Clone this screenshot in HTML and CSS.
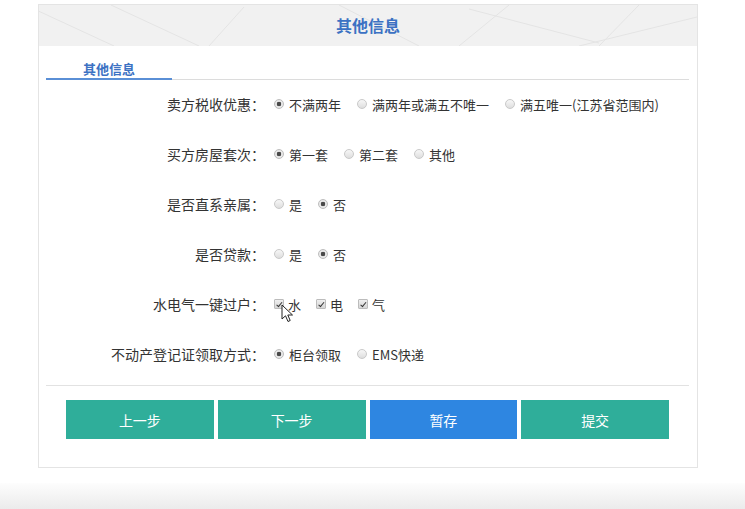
FILE: index.html
```html
<!DOCTYPE html>
<html lang="zh-CN">
<head>
<meta charset="utf-8">
<title>其他信息</title>
<link rel="stylesheet" href="styles.css">
</head>
<body>
<div class="card">
  <div class="card-header">
    <svg class="header-lines" width="658" height="41" viewBox="0 0 658 41">
      <g stroke="#e4e4e4" stroke-width="1" fill="none">
        <line x1="-5" y1="4" x2="75" y2="41"/>
        <line x1="72" y1="0" x2="160" y2="41"/>
        <line x1="205" y1="2" x2="170" y2="41"/>
        <line x1="300" y1="0" x2="380" y2="41"/>
        <line x1="420" y1="41" x2="470" y2="0"/>
        <line x1="430" y1="4" x2="560" y2="38"/>
        <line x1="600" y1="0" x2="560" y2="41"/>
        <line x1="540" y1="41" x2="658" y2="12"/>
      </g>
    </svg>
    <h1 class="card-title">其他信息</h1>
  </div>
  <div class="section">
    <div class="tabs"><span class="tab">其他信息</span></div>
    <div class="form">
      <div class="row">
        <div class="label">卖方税收优惠：</div>
        <div class="opts">
          <span class="opt"><span class="radio on"></span>不满两年</span>
          <span class="opt"><span class="radio"></span>满两年或满五不唯一</span>
          <span class="opt"><span class="radio"></span>满五唯一(江苏省范围内)</span>
        </div>
      </div>
      <div class="row">
        <div class="label">买方房屋套次：</div>
        <div class="opts">
          <span class="opt"><span class="radio on"></span>第一套</span>
          <span class="opt"><span class="radio"></span>第二套</span>
          <span class="opt"><span class="radio"></span>其他</span>
        </div>
      </div>
      <div class="row">
        <div class="label">是否直系亲属：</div>
        <div class="opts">
          <span class="opt"><span class="radio"></span>是</span>
          <span class="opt"><span class="radio on"></span>否</span>
        </div>
      </div>
      <div class="row">
        <div class="label">是否贷款：</div>
        <div class="opts">
          <span class="opt"><span class="radio"></span>是</span>
          <span class="opt"><span class="radio on"></span>否</span>
        </div>
      </div>
      <div class="row">
        <div class="label">水电气一键过户：</div>
        <div class="opts">
          <span class="opt cb"><span class="check"></span>水</span>
          <span class="opt cb"><span class="check"></span>电</span>
          <span class="opt cb"><span class="check"></span>气</span>
        </div>
      </div>
      <div class="row">
        <div class="label">不动产登记证领取方式：</div>
        <div class="opts">
          <span class="opt"><span class="radio on"></span>柜台领取</span>
          <span class="opt"><span class="radio"></span>EMS快递</span>
        </div>
      </div>
    </div>
    <div class="actions">
      <button class="btn">上一步</button>
      <button class="btn">下一步</button>
      <button class="btn btn-blue">暂存</button>
      <button class="btn">提交</button>
    </div>
  </div>
</div>
<div class="shade"></div>
<svg class="cursor" width="13" height="19" viewBox="0 0 13 19">
  <path d="M1 1 L1 15 L4.5 11.8 L7 17.5 L9.2 16.5 L6.8 11 L11.5 11 Z" fill="#fff" stroke="#222" stroke-width="1" stroke-linejoin="round"/>
</svg>
</body>
</html>
```

FILE: styles.css
```css
html, body {
  margin: 0;
  padding: 0;
  background: #fff;
  font-family: "Noto Sans CJK SC", "Noto Sans", sans-serif;
  color: #333;
}
body {
  position: relative;
  height: 509px;
  overflow: hidden;
}
.card {
  margin: 4px 0 0 38px;
  width: 658px;
  height: 462px;
  border: 1px solid #e4e4e4;
  background: #fff;
}
.card-header {
  position: relative;
  height: 41px;
  background: #f1f1f1;
  overflow: hidden;
}
.header-lines {
  position: absolute;
  left: 0;
  top: 0;
}
.card-title {
  position: relative;
  margin: 0;
  line-height: 41px;
  text-align: center;
  font-size: 16px;
  font-weight: bold;
  color: #3c72c3;
}
.section {
  padding: 0 8px 0 7px;
}
.tabs {
  margin-top: 14px;
  border-bottom: 1px solid #dcdcdc;
  display: flex;
}
.tab {
  width: 126px;
  text-align: center;
  font-size: 13px;
  font-weight: bold;
  color: #3c72c3;
  line-height: 18px;
  border-bottom: 2px solid #5a8fd6;
  margin-bottom: -1px;
}
.form {
  display: flex;
  flex-direction: column;
  margin-top: -1px;
}
.row {
  height: 50px;
  display: grid;
  grid-template-columns: 219px 1fr;
  column-gap: 9px;
  align-items: center;
}
.label {
  text-align: right;
  font-size: 14px;
  color: #333;
  white-space: nowrap;
}
.opts {
  display: flex;
  align-items: center;
  gap: 16px;
  font-size: 13px;
  color: #333;
}
.opt {
  display: flex;
  align-items: center;
  gap: 5px;
  white-space: nowrap;
}
.radio {
  width: 8px;
  height: 8px;
  border-radius: 50%;
  border: 1px solid #c9c9c9;
  background: linear-gradient(#f7f7f7, #dedede);
  position: relative;
}
.radio.on {
  background: radial-gradient(circle, #4a4a4a 0, #4a4a4a 2px, #ececec 2.6px, #e0e0e0 100%);
  border-color: #bdbdbd;
}
.cb {
  gap: 4px;
}
.opts .cb + .cb {
  margin-left: -1px;
}
.check {
  width: 8px;
  height: 8px;
  border: 1px solid #bcbcbc;
  border-radius: 1px;
  background: linear-gradient(#efefef, #d6d6d6);
  position: relative;
}
.check::after {
  content: "";
  position: absolute;
  left: 2.5px;
  top: 0.5px;
  width: 2px;
  height: 4.5px;
  border-right: 1.5px solid #333;
  border-bottom: 1.5px solid #333;
  transform: rotate(40deg);
}
.actions {
  margin-top: 6px;
  border-top: 1px solid #e2e2e2;
  padding: 14px 20px 0 20px;
  display: flex;
  gap: 4px;
}
.btn {
  width: 148px;
  height: 39px;
  border: 0;
  margin: 0;
  padding: 0;
  background: #2fae9a;
  color: #fff;
  font-family: "Noto Sans CJK SC", "Noto Sans", sans-serif;
  font-size: 14px;
  cursor: pointer;
}
.btn-blue {
  background: #2e86e1;
}
.shade {
  position: absolute;
  left: 0;
  right: 0;
  bottom: 0;
  height: 26px;
  background: linear-gradient(#fdfdfd, #ebebeb);
}
.cursor {
  position: absolute;
  left: 281px;
  top: 304px;
}
```
